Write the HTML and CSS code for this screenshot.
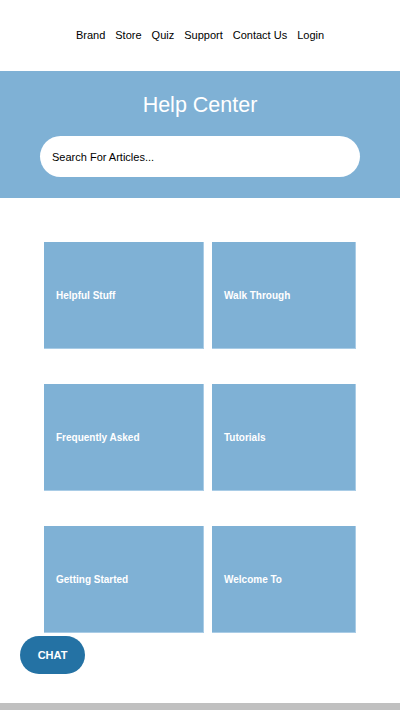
FILE: index.html
```html
<!DOCTYPE html>
<html lang="en">
<head>
  <meta charset="UTF-8">
  <meta name="viewport" content="width=device-width, initial-scale=1.0">
  <title>Help Center</title>
  <link rel="stylesheet" href="styles.css">
</head>
<body>
  <nav class="topnav">
    <a href="#">Brand</a>
    <a href="#">Store</a>
    <a href="#">Quiz</a>
    <a href="#">Support</a>
    <a href="#">Contact Us</a>
    <a href="#">Login</a>
  </nav>

  <header class="hero">
    <h1>Help Center</h1>
    <input type="text" class="search" placeholder="Search For Articles...">
  </header>

  <main class="topics">
    <a href="#" class="topic">Helpful Stuff</a>
    <a href="#" class="topic">Walk Through</a>
    <a href="#" class="topic">Frequently Asked</a>
    <a href="#" class="topic">Tutorials</a>
    <a href="#" class="topic">Getting Started</a>
    <a href="#" class="topic">Welcome To</a>
  </main>

  <button class="chat">CHAT</button>
  <div class="footer-bar"></div>
</body>
</html>
```

FILE: styles.css
```css
body {
  font-family: "Liberation Sans", Arial, sans-serif;
  margin: 0;
  padding: 0;
  background: #fff;
  color: #000;
  height: 710px;
  position: relative;
}

.topnav {
  display: flex;
  justify-content: center;
  gap: 10px;
  height: 71px;
  box-sizing: border-box;
  padding-bottom: 2px;
  align-items: center;
  font-size: 11px;
}

.topnav a {
  color: #000;
  text-decoration: none;
}

.hero {
  background: #7fb1d5;
  height: 127px;
  box-sizing: border-box;
  padding-top: 22px;
  text-align: center;
}

.hero h1 {
  margin: 0 0 18px;
  font-size: 21.5px;
  font-weight: normal;
  color: #fff;
  line-height: 25px;
}

.search {
  display: block;
  box-sizing: border-box;
  width: 320px;
  height: 41px;
  margin: 0 auto;
  padding: 0 12px;
  border: none;
  border-radius: 21px;
  font-family: "Liberation Sans", Arial, sans-serif;
  font-size: 11px;
  outline: none;
}

.search::placeholder {
  color: #000;
}

.topics {
  display: grid;
  grid-template-columns: 160px 144px;
  column-gap: 8px;
  row-gap: 35px;
  justify-content: center;
  padding-top: 44px;
}

.topic {
  display: flex;
  align-items: center;
  box-sizing: border-box;
  height: 107px;
  padding: 0 12px;
  background: #7fb1d5;
  border-right: 1px solid #a9cce6;
  border-bottom: 1px solid #a9cce6;
  color: #fff;
  font-size: 10px;
  font-weight: bold;
  text-decoration: none;
}

.chat {
  position: absolute;
  left: 20px;
  top: 636px;
  width: 65px;
  height: 38px;
  border: none;
  border-radius: 19px;
  background: #2472a4;
  color: #fff;
  font-family: "Liberation Sans", Arial, sans-serif;
  font-size: 11px;
  font-weight: bold;
  cursor: pointer;
}

.footer-bar {
  position: absolute;
  left: 0;
  right: 0;
  top: 703px;
  height: 7px;
  background: #c0c0c0;
}
```
